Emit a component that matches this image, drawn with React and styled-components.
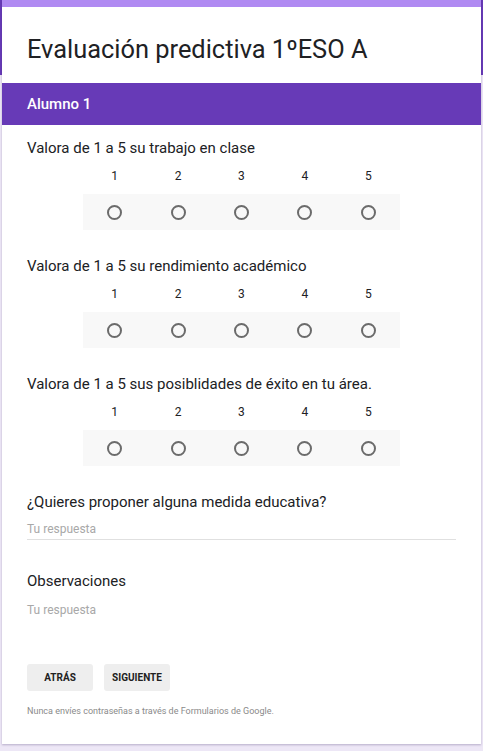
import React from "react";
import styled, { createGlobalStyle } from "styled-components";

const Global = createGlobalStyle`
  html, body { margin: 0; padding: 0; }
  body {
    font-family: Roboto, "Noto Sans", Arial, sans-serif;
    color: #202124;
    background: #ede7f6;
  }
  * { box-sizing: border-box; }
`;

const Page = styled.div`
  min-height: 751px;
  padding: 0 2px 4px;
  background: linear-gradient(#673ab7 0, #673ab7 75px, #ede7f6 75px);
`;

const Card = styled.div`
  background: #fff;
  border-top: 7px solid #b08af2;
  box-shadow: 0 1px 2px rgba(60, 40, 100, 0.3);
`;

const TitleBlock = styled.div`
  padding: 26px 25px 18px;
`;

const Title = styled.h1`
  margin: 0;
  font-size: 25.4px;
  line-height: 32px;
  font-weight: 400;
  color: #202124;
`;

const SectionBar = styled.div`
  height: 42px;
  display: flex;
  align-items: center;
  padding: 0 25px;
  background: #673ab7;
  color: #fff;
  font-size: 15px;
  font-weight: 500;
`;

const Body = styled.div`
  padding: 11px 25px 25px;
  display: flex;
  flex-direction: column;
`;

const Question = styled.div`
  display: flex;
  flex-direction: column;
  margin-bottom: ${(p) => p.$gap}px;
`;

const QTitle = styled.div`
  font-size: 15px;
  line-height: 24px;
  color: #202124;
`;

const Scale = styled.div`
  width: 317px;
  align-self: center;
  display: grid;
  grid-template-columns: repeat(5, 1fr);
`;

const NumRow = styled(Scale)`
  margin-top: 6px;
  height: 20px;
  font-size: 12px;
  line-height: 20px;
  color: #202124;
  text-align: center;
`;

const RadioRow = styled(Scale)`
  margin-top: 8px;
  height: 36px;
  background: #f8f8f8;
  align-items: center;
  justify-items: center;
`;

const Radio = styled.span`
  width: 15px;
  height: 15px;
  border: 2px solid #6b6b6b;
  border-radius: 50%;
  display: block;
`;

const Answer = styled.div`
  margin-top: ${(p) => p.$top}px;
  font-size: 12px;
  line-height: 20px;
  color: #a8a8a8;
  border-bottom: ${(p) => (p.$line ? "1px solid #e0e0e0" : "none")};
`;

const Buttons = styled.div`
  margin-top: 44px;
  display: flex;
  gap: 11px;
`;

const Button = styled.button`
  min-width: 66px;
  height: 27px;
  padding: 0 7px;
  border: none;
  border-radius: 3px;
  background: #eeeeee;
  font-family: Roboto, Arial, sans-serif;
  font-size: 10px;
  font-weight: 700;
  color: #212121;
  text-transform: uppercase;
`;

const Footer = styled.div`
  margin-top: 12px;
  font-size: 9px;
  line-height: 16px;
  color: #8a8a8a;
`;

const scaleQuestions = [
  "Valora de 1 a 5 su trabajo en clase",
  "Valora de 1 a 5 su rendimiento académico",
  "Valora de 1 a 5 sus posiblidades de éxito en tu área.",
];

const nums = [1, 2, 3, 4, 5];

export default function App() {
  return (
    <>
      <Global />
      <Page>
        <Card>
          <TitleBlock>
            <Title>Evaluación predictiva 1ºESO A</Title>
          </TitleBlock>
          <SectionBar>Alumno 1</SectionBar>
          <Body>
            {scaleQuestions.map((q) => (
              <Question key={q} $gap={24}>
                <QTitle>{q}</QTitle>
                <NumRow>
                  {nums.map((n) => (
                    <span key={n}>{n}</span>
                  ))}
                </NumRow>
                <RadioRow>
                  {nums.map((n) => (
                    <Radio key={n} />
                  ))}
                </RadioRow>
              </Question>
            ))}
            <Question $gap={29}>
              <QTitle>¿Quieres proponer alguna medida educativa?</QTitle>
              <Answer $top={5} $line>Tu respuesta</Answer>
            </Question>
            <Question $gap={0}>
              <QTitle>Observaciones</QTitle>
              <Answer $top={7}>Tu respuesta</Answer>
            </Question>
            <Buttons>
              <Button>Atrás</Button>
              <Button>Siguiente</Button>
            </Buttons>
            <Footer>Nunca envíes contraseñas a través de Formularios de Google.</Footer>
          </Body>
        </Card>
      </Page>
    </>
  );
}
